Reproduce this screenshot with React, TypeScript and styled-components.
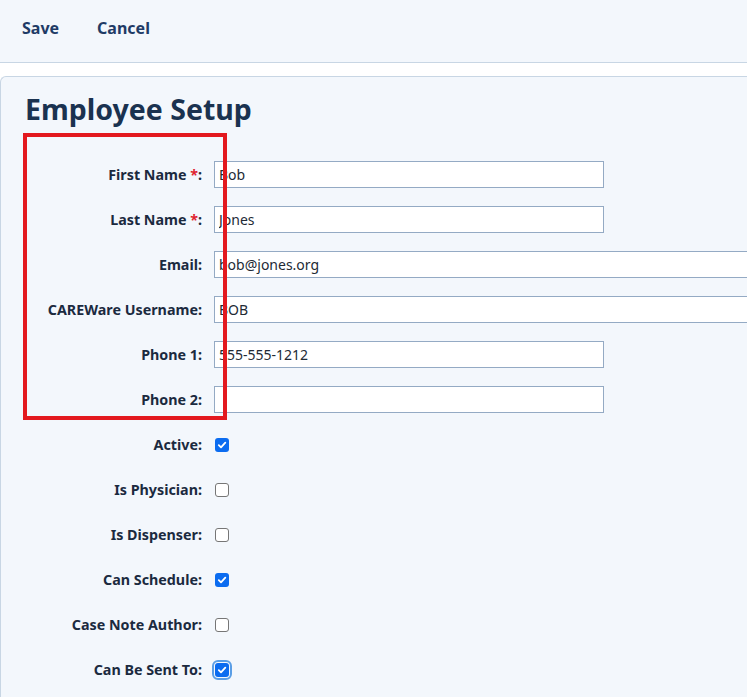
import React from "react";
import styled, { createGlobalStyle } from "styled-components";

const GlobalStyle = createGlobalStyle`
  html, body {
    margin: 0;
    padding: 0;
    background: #ffffff;
    overflow: hidden;
  }
  body {
    font-family: "Noto Sans", "Open Sans", "Liberation Sans", sans-serif;
    color: #1b2a3f;
  }
`;

const Page = styled.div`
  width: 747px;
  height: 697px;
  display: flex;
  flex-direction: column;
  overflow: hidden;
`;

const Toolbar = styled.div`
  height: 62px;
  flex: 0 0 auto;
  display: flex;
  align-items: center;
  gap: 38px;
  padding: 0 22px;
  background: #f3f7fc;
  border-bottom: 1px solid #c8d6e4;
`;

const ToolButton = styled.button`
  border: none;
  background: none;
  padding: 0;
  font-family: inherit;
  font-size: 16px;
  font-weight: 700;
  color: #1f3b66;
  cursor: pointer;
  margin-top: -6px;
`;

const Card = styled.section`
  margin-top: 13px;
  flex: 1 1 auto;
  background: #f3f7fc;
  border-top: 1px solid #c8d6e4;
  border-left: 1px solid #c8d6e4;
  border-top-left-radius: 6px;
  padding: 13px 0 0 24px;
`;

const Title = styled.h1`
  margin: 0 0 24px;
  font-size: 28.5px;
  line-height: 38px;
  font-weight: 700;
  color: #1a3250;
`;

const Form = styled.div`
  position: relative;
  display: grid;
  grid-template-columns: 177px 1fr;
  column-gap: 12px;
  grid-auto-rows: 45px;
  align-items: center;
`;

const Label = styled.label`
  text-align: right;
  font-size: 14.3px;
  font-weight: 700;
  color: #1b2a3f;
  white-space: nowrap;
`;

const Req = styled.span`
  color: #e0242f;
`;

const TextInput = styled.input<{ $wide?: boolean }>`
  box-sizing: border-box;
  width: ${(p) => (p.$wide ? "600px" : "390px")};
  height: 27px;
  margin: 0;
  padding: 0 4px;
  border: 1px solid #94aac4;
  border-radius: 0;
  background: #ffffff;
  font-family: inherit;
  font-size: 14px;
  color: #222a35;
  outline: none;
`;

const Box = styled.span<{ $checked: boolean; $focus?: boolean }>`
  box-sizing: border-box;
  display: inline-flex;
  align-items: center;
  justify-content: center;
  width: 14px;
  height: 14px;
  margin-left: 1px;
  border-radius: 3px;
  background: ${(p) => (p.$checked ? "#0b6cf0" : "#ffffff")};
  border: ${(p) => (p.$checked ? "none" : "1px solid #767676")};
  outline: ${(p) => (p.$focus ? "2px solid #5a9ee6" : "none")};
  outline-offset: 1px;
`;

const Highlight = styled.div`
  position: absolute;
  left: -2px;
  top: -19px;
  width: 204px;
  height: 287px;
  box-sizing: border-box;
  border: 4px solid #e3191f;
  pointer-events: none;
`;

type Field = { label: string; value: string; required?: boolean; wide?: boolean };

const fields: Field[] = [
  { label: "First Name", value: "Bob", required: true },
  { label: "Last Name", value: "Jones", required: true },
  { label: "Email", value: "bob@jones.org", wide: true },
  { label: "CAREWare Username", value: "BOB", wide: true },
  { label: "Phone 1", value: "555-555-1212" },
  { label: "Phone 2", value: "" },
];

type Flag = { label: string; checked: boolean; focus?: boolean };

const flags: Flag[] = [
  { label: "Active", checked: true },
  { label: "Is Physician", checked: false },
  { label: "Is Dispenser", checked: false },
  { label: "Can Schedule", checked: true },
  { label: "Case Note Author", checked: false },
  { label: "Can Be Sent To", checked: true, focus: true },
];

const Check = () => (
  <svg width="10" height="10" viewBox="0 0 10 10">
    <path d="M1.8 5.2 L4 7.3 L8.3 2.6" fill="none" stroke="#fff" strokeWidth="1.8" strokeLinecap="round" strokeLinejoin="round" />
  </svg>
);

const Cell = styled.div`
  display: flex;
  align-items: center;
`;

export default function App() {
  return (
    <Page>
      <GlobalStyle />
      <Toolbar>
        <ToolButton>Save</ToolButton>
        <ToolButton>Cancel</ToolButton>
      </Toolbar>
      <Card>
        <Title>Employee Setup</Title>
        <Form>
          <Highlight />
          {fields.map((f) => (
            <React.Fragment key={f.label}>
              <Label>
                {f.label}
                {f.required && <Req> *</Req>}:
              </Label>
              <Cell>
                <TextInput $wide={f.wide} defaultValue={f.value} />
              </Cell>
            </React.Fragment>
          ))}
          {flags.map((f) => (
            <React.Fragment key={f.label}>
              <Label>{f.label}:</Label>
              <Cell>
                <Box $checked={f.checked} $focus={f.focus}>
                  {f.checked && <Check />}
                </Box>
              </Cell>
            </React.Fragment>
          ))}
        </Form>
      </Card>
    </Page>
  );
}
